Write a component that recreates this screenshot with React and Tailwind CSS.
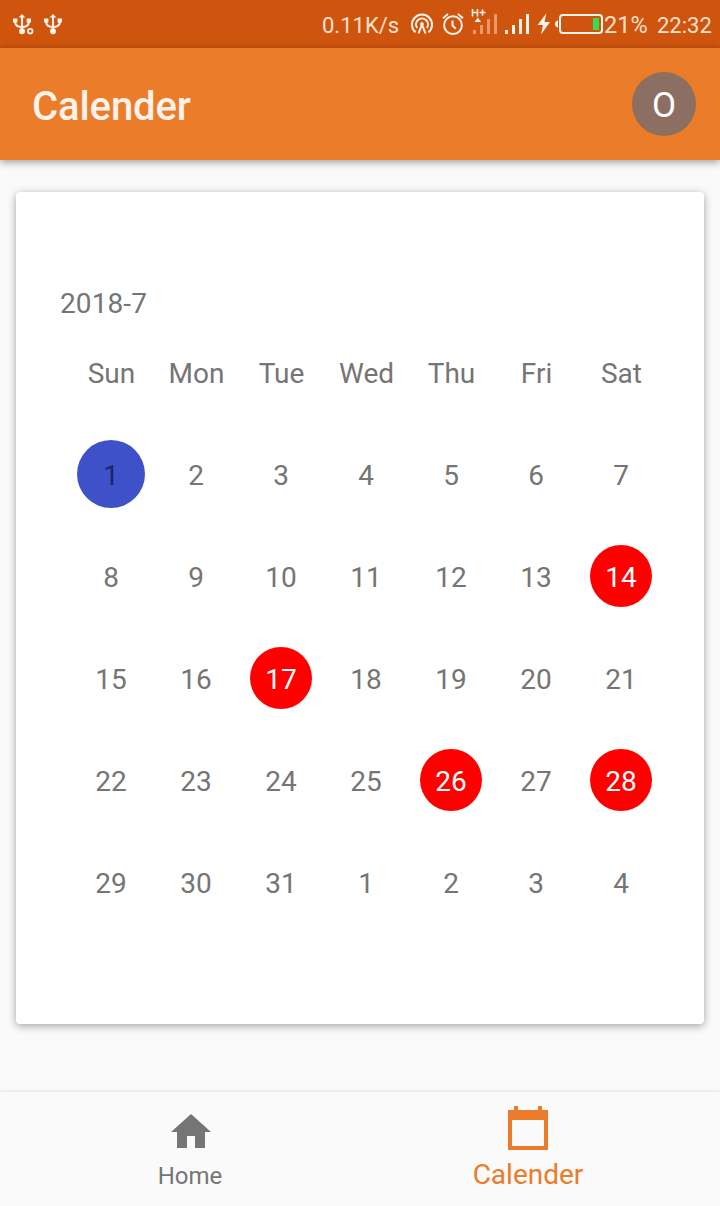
const WEEKDAYS = ["Sun", "Mon", "Tue", "Wed", "Thu", "Fri", "Sat"];
const DAYS = [...Array.from({ length: 31 }, (_, i) => i + 1), 1, 2, 3, 4];
const MARKED = [14, 17, 26, 28];

function UsbIcon({ badge, className }) {
  return (
    <svg className={className} width="22" height="22" viewBox="0 0 22 22" fill="none" stroke="#fff3ea" strokeWidth="2.1">
      <path d="M10 3v15M3.200 7v2.300c0 3 3 4.700 6.800 4.700s6.800-1.700 6.800-4.700V7" />
      <path d="M10 1l3.400 3.400H6.600zM1 5.500h4.400v4H1zM14.600 5.500H19v4h-4.400z" fill="#fff3ea" stroke="none" />
      <circle cx="10" cy="18.300" r="3" fill="#fff3ea" stroke="none" />
      {badge && <circle cx="18.200" cy="18.200" r="2.300" strokeWidth="1.700" />}
    </svg>
  );
}

function StatusBar() {
  return (
    <div className="flex h-12 shrink-0 items-center bg-[#cf540e] text-[#fce0cf]">
      <UsbIcon badge className="ml-3 shrink-0" />
      <UsbIcon className="ml-[9px] shrink-0" />
      <span className="ml-auto w-[77px] pt-[4px] text-[22px] leading-none whitespace-nowrap">0.11K/s</span>
      <svg className="ml-[11px] shrink-0" width="24" height="24" viewBox="0 0 24 24" fill="none" stroke="#fff3ea" strokeWidth="2">
        <path d="M5.600 20.300a10 10 0 1 1 12.800 0" />
        <path d="M7.200 16a6 6 0 1 1 9.600 0" />
        <path d="M8.500 21.500L12 12.500l3.500 9" />
        <circle cx="12" cy="12" r="1.800" fill="#fff3ea" stroke="none" />
      </svg>
      <svg className="ml-[8px] shrink-0" width="22" height="24" viewBox="0 0 22 24" fill="none" stroke="#fff3ea" strokeWidth="2">
        <circle cx="11" cy="13.200" r="8.900" />
        <path d="M1 6.300L6 2M21 6.300L16 2M10.500 8.500v5l3.300 3.300" />
      </svg>
      <svg className="ml-[7px] shrink-0" width="28" height="48" viewBox="0 0 28 48">
        <g fill="#e89869">
          <path d="M2 30h3v4H2zM9 25h3v9H9zM16 19h3v15h-3zM23 14h3v20h-3z" />
        </g>
        <path d="M1.500 9v7.500M6.500 9v7.500M1.500 12.500h5M8.500 12.500h6M11.500 9.500v6" stroke="#fff3ea" strokeWidth="1.600" fill="none" />
        <path d="M6.800 17.500l3.200 4.500H3.500z" fill="#fff3ea" />
      </svg>
      <svg className="ml-[6px] shrink-0" width="25" height="22" viewBox="0 0 25 22" fill="#fff3ea">
        <path d="M0 17h3v4H0zM7 12h3v9H7zM14 6h3v15h-3zM21 1h3v20h-3z" />
      </svg>
      <svg className="ml-[7px] shrink-0" width="14" height="22" viewBox="0 0 14 22" fill="#fff3ea">
        <path d="M9.500 0L.5 12H6L4 21.500 13 9H7.500z" />
      </svg>
      <svg className="ml-[4px] shrink-0" width="49" height="22" viewBox="0 0 49 22" fill="none">
        <rect x="5" y="2" width="42" height="18" rx="3" stroke="#fff3ea" strokeWidth="2" />
        <path d="M3 7.500v7C1.500 14.500 0 13 0 11s1.500-3.500 3-3.500z" fill="#fff3ea" />
        <path d="M38 5h6v12h-6z" fill="#36dc51" />
      </svg>
      <span className="w-[53px] pt-[3px] text-[23.500px] leading-none">21%</span>
      <span className="mr-[10px] w-[53px] pt-[4px] text-right text-[22px] leading-none">22:32</span>
    </div>
  );
}

function Day({ value, index }) {
  if (index === 0) {
    return (
      <div className="flex size-[68px] items-center justify-center rounded-full bg-[#3f51c9] pt-[3px] text-[#1d2567]">
        {value}
      </div>
    );
  }
  if (index < 31 && MARKED.includes(value)) {
    return (
      <div className="flex size-[62px] items-center justify-center rounded-full bg-[#ff0000] pt-[3px] text-white">
        {value}
      </div>
    );
  }
  return <div className="pt-[3px]">{value}</div>;
}

export default function App() {
  return (
    <div className="flex h-[1206px] w-[720px] flex-col overflow-hidden bg-[#fafafa] font-['Roboto',sans-serif]">
      <StatusBar />
      <header className="flex h-28 shrink-0 items-center justify-between bg-[#eb7c29] pr-6 pl-8 shadow-[0_2px_8px_rgba(0,0,0,0.4)]">
        <h1 className="pt-[6px] text-[40px] leading-none font-medium tracking-[-0.1px] text-[#fdf2ea]">Calender</h1>
        <div className="flex size-16 items-center justify-center rounded-full bg-[#8d6e63] pt-[2px] text-[35px] leading-none text-white">
          O
        </div>
      </header>
      <main className="flex-1 px-4 pt-8">
        <section className="flex h-[832px] flex-col rounded-[4px] bg-white text-[28px] leading-8 text-[#757575] shadow-[0_2px_8px_rgba(0,0,0,0.36)]">
          <div className="mt-[96px] pl-[44px] tracking-[0.1px]">2018-7</div>
          <div className="mt-[38px] ml-[53px] grid w-[595px] grid-cols-7 text-center">
            {WEEKDAYS.map((d) => (
              <div key={d}>{d}</div>
            ))}
          </div>
          <div className="mt-[33px] ml-[52.500px] grid w-[595px] auto-rows-[102px] grid-cols-7">
            {DAYS.map((d, i) => (
              <div key={i} className="flex items-center justify-center">
                <Day value={d} index={i} />
              </div>
            ))}
          </div>
        </section>
      </main>
      <nav className="flex h-[114px] shrink-0 bg-[#fafafa] pl-[21px] shadow-[0_0_4px_rgba(0,0,0,0.16)]">
        <div className="flex w-[338px] flex-col items-center pt-[16px] text-[24px] leading-8 text-[#757575]">
          <svg width="48" height="48" viewBox="0 0 24 24" fill="#757575" className="ml-px">
            <path d="M10 20v-6h4v6h5v-8h3L12 3 2 12h3v8z" />
          </svg>
          <span className="mt-[4px]">Home</span>
        </div>
        <div className="flex w-[338px] flex-col items-center pt-[14px] text-[28px] leading-8 text-[#eb7c29]">
          <svg width="40" height="44" viewBox="0 0 40 44" fill="#eb7c29" fillRule="evenodd">
            <path d="M6 0h4v4h20V0h4v4h6v40H0V4h6zM4 14v26h32V14z" />
          </svg>
          <span className="mt-[9px]">Calender</span>
        </div>
      </nav>
    </div>
  );
}
